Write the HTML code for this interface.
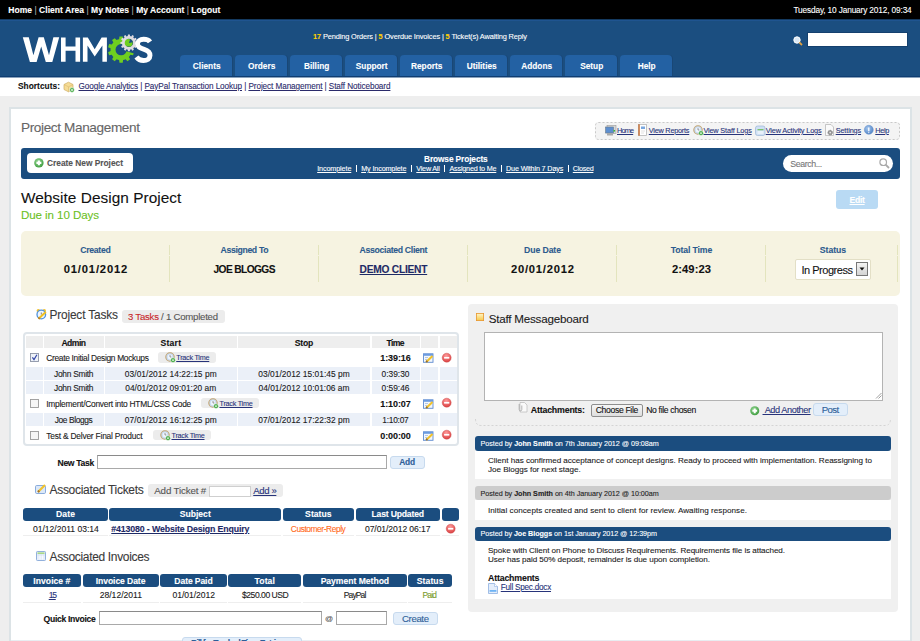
<!DOCTYPE html><html><head><meta charset="utf-8"><style>
html,body{margin:0;padding:0}
body{width:920px;height:641px;overflow:hidden;position:relative;background:#eeeeee;font-family:"Liberation Sans",sans-serif}
.t{position:absolute;white-space:nowrap;-webkit-text-stroke:0.1px currentColor}
.r{position:absolute;box-sizing:border-box}
.u{text-decoration:underline}
.sep{font-weight:normal;color:#aaa}
svg{position:absolute;overflow:visible}
</style></head><body>
<div class=r style='left:0px;top:0px;width:920px;height:19px;background:#000'></div>
<div class=t style='left:8.3px;top:-0.10px;font-size:8.5px;line-height:20px;font-weight:bold;color:#fff;letter-spacing:0.032px;'>Home <span class=sep>|</span> Client Area <span class=sep>|</span> My Notes <span class=sep>|</span> My Account <span class=sep>|</span> Logout</div>
<div class=t style='right:8.299999999999955px;top:0.10px;font-size:8.3px;line-height:20px;font-weight:normal;color:#fff;letter-spacing:-0.147px;margin-right:0.147px;'>Tuesday, 10 January 2012, 09:34</div>
<div class=r style='left:0px;top:19px;width:920px;height:58px;background:#1b4e80'></div>
<div class=r style='left:0px;top:19px;width:920px;height:1px;background:#143a60'></div>
<div class=r style='left:0px;top:20px;width:920px;height:1px;background:#1f5490'></div>
<div class=r style='left:0px;top:76px;width:920px;height:1px;background:#0f3d72'></div>
<div class=r style='left:0px;top:77px;width:920px;height:1px;background:#8aa2bc'></div>
<svg style='left:0;top:0' width='200' height='77' viewBox='0 0 200 77'>
<path d='M22.8,37.3 L28.8,37.3 L33.4,55.2 L38.6,37.3 L43.8,37.3 L49,55.2 L53.4,37.3 L59.2,37.3 L52.3,62 L45.8,62 L41.2,46.5 L36.6,62 L29.9,62Z' fill='#fff'/>
<path d='M61,37.4 H65.6 V46.6 H75.5 V37.4 H80.1 V61.8 H75.5 V50.7 H65.6 V61.8 H61Z' fill='#fff'/>
<path d='M82.9,37.4 H87.8 L94.7,49.2 L101.6,37.4 H106.9 V61.8 H102.4 V45.5 L94.7,56.5 L87.5,45.5 V61.8 H82.9Z' fill='#fff'/>
<path d='M124.38,39.62 L125.61,40.11 L127.46,38.13 L130.14,40.08 L128.83,42.44 L129.68,43.47 L130.39,44.59 L133.04,44.08 L134.07,47.23 L131.62,48.37 L131.70,49.70 L131.62,51.03 L134.07,52.17 L133.04,55.32 L130.39,54.81 L129.68,55.93 L128.83,56.96 L130.14,59.32 L127.46,61.27 L125.61,59.29 L124.38,59.78 L123.09,60.11 L122.75,62.80 L119.45,62.80 L119.11,60.11 L117.82,59.78 L116.59,59.29 L114.74,61.27 L112.06,59.32 L113.37,56.96 L112.52,55.93 L111.81,54.81 L109.16,55.32 L108.13,52.17 L110.58,51.03 L110.50,49.70 L110.58,48.37 L108.13,47.23 L109.16,44.08 L111.81,44.59 L112.52,43.47 L113.37,42.44 L112.06,40.08 L114.74,38.13 L116.59,40.11 L117.82,39.62 L119.11,39.29 L119.45,36.60 L122.75,36.60 L123.09,39.29ZM126.70,49.70 A5.6,5.6 0 1,0 115.50,49.70 A5.6,5.6 0 1,0 126.70,49.70Z' fill='#6fcf1f' fill-rule='evenodd'/>
<path d='M121.1,49.7 L132.21,40.38 A14.5,14.5 0 0,1 135.04,53.70Z' fill='#1b4e80'/>
<path d='M127.11,36.24 L127.78,36.09 L127.97,34.45 L129.83,34.45 L130.02,36.09 L130.69,36.24 L131.34,36.45 L132.32,35.12 L133.93,36.05 L133.27,37.56 L133.78,38.02 L134.24,38.53 L135.75,37.87 L136.68,39.48 L135.35,40.46 L135.56,41.11 L135.71,41.78 L137.35,41.97 L137.35,43.83 L135.71,44.02 L135.56,44.69 L135.35,45.34 L136.68,46.32 L135.75,47.93 L134.24,47.27 L133.78,47.78 L133.27,48.24 L133.93,49.75 L132.32,50.68 L131.34,49.35 L130.69,49.56 L130.02,49.71 L129.83,51.35 L127.97,51.35 L127.78,49.71 L127.11,49.56 L126.46,49.35 L125.48,50.68 L123.87,49.75 L124.53,48.24 L124.02,47.78 L123.56,47.27 L122.05,47.93 L121.12,46.32 L122.45,45.34 L122.24,44.69 L122.09,44.02 L120.45,43.83 L120.45,41.97 L122.09,41.78 L122.24,41.11 L122.45,40.46 L121.12,39.48 L122.05,37.87 L123.56,38.53 L124.02,38.02 L124.53,37.56 L123.87,36.05 L125.48,35.12 L126.46,36.45ZM133.10,42.90 A4.2,4.2 0 1,0 124.70,42.90 A4.2,4.2 0 1,0 133.10,42.90Z' fill='#dedbe0' fill-rule='evenodd'/>
<circle cx='128.9' cy='42.9' r='3.7' fill='#6fcf1f'/>
<path d='M128.9,42.9 L130.20,39.33 A3.8,3.8 0 0,1 132.64,42.24Z' fill='#1b4e80'/>
<path d='M150,41.8 C148.5,39.6 146.2,39.3 143.6,39.3 C140,39.3 137.5,41.2 137.5,44 C137.5,47.2 140.6,48.3 144.2,49.4 C148,50.6 150,52.4 150,55.5 C150,58.8 147.2,60.5 143.5,60.5 C140.4,60.5 138,59.2 136.4,57' fill='none' stroke='#fff' stroke-width='4.9'/>
</svg>
<div class=t style='left:313px;top:27.10px;font-size:7.4px;line-height:20px;font-weight:normal;color:#fff;letter-spacing:-0.126px;'><b style='color:#ffd200'>17</b> Pending Orders | <b style='color:#ffd200'>5</b> Overdue Invoices | <b style='color:#ffd200'>5</b> Ticket(s) Awaiting Reply</div>
<svg style='left:793px;top:36px' width='10' height='10' viewBox='0 0 10 10'><circle cx='4' cy='4' r='3.2' fill='#dbe8f5' stroke='#fff' stroke-width='1'/><line x1='6.3' y1='6.3' x2='9' y2='9' stroke='#e0a040' stroke-width='1.8'/></svg>
<div class=r style='left:807px;top:32px;width:101px;height:15px;background:#fff;border:1px solid #14406e'></div>
<div class=r style='left:180px;top:55px;width:52px;height:21px;background:#2361a3;border-radius:4px 4px 0 0;box-shadow:1px 0 0 #194776'></div>
<div class=t style='left:180.7px;width:52px;text-align:center;top:56.30px;font-size:8.3px;line-height:20px;font-weight:bold;color:#fff;'>Clients</div>
<div class=r style='left:235px;top:55px;width:52px;height:21px;background:#2361a3;border-radius:4px 4px 0 0;box-shadow:1px 0 0 #194776'></div>
<div class=t style='left:235.7px;width:52px;text-align:center;top:56.30px;font-size:8.3px;line-height:20px;font-weight:bold;color:#fff;'>Orders</div>
<div class=r style='left:290px;top:55px;width:52px;height:21px;background:#2361a3;border-radius:4px 4px 0 0;box-shadow:1px 0 0 #194776'></div>
<div class=t style='left:290.7px;width:52px;text-align:center;top:56.30px;font-size:8.3px;line-height:20px;font-weight:bold;color:#fff;'>Billing</div>
<div class=r style='left:345px;top:55px;width:52px;height:21px;background:#2361a3;border-radius:4px 4px 0 0;box-shadow:1px 0 0 #194776'></div>
<div class=t style='left:345.7px;width:52px;text-align:center;top:56.30px;font-size:8.3px;line-height:20px;font-weight:bold;color:#fff;'>Support</div>
<div class=r style='left:400px;top:55px;width:52px;height:21px;background:#2361a3;border-radius:4px 4px 0 0;box-shadow:1px 0 0 #194776'></div>
<div class=t style='left:400.7px;width:52px;text-align:center;top:56.30px;font-size:8.3px;line-height:20px;font-weight:bold;color:#fff;'>Reports</div>
<div class=r style='left:455px;top:55px;width:52px;height:21px;background:#2361a3;border-radius:4px 4px 0 0;box-shadow:1px 0 0 #194776'></div>
<div class=t style='left:455.7px;width:52px;text-align:center;top:56.30px;font-size:8.3px;line-height:20px;font-weight:bold;color:#fff;'>Utilities</div>
<div class=r style='left:510px;top:55px;width:52px;height:21px;background:#2361a3;border-radius:4px 4px 0 0;box-shadow:1px 0 0 #194776'></div>
<div class=t style='left:510.70000000000005px;width:52px;text-align:center;top:56.30px;font-size:8.3px;line-height:20px;font-weight:bold;color:#fff;'>Addons</div>
<div class=r style='left:565px;top:55px;width:52px;height:21px;background:#2361a3;border-radius:4px 4px 0 0;box-shadow:1px 0 0 #194776'></div>
<div class=t style='left:565.7px;width:52px;text-align:center;top:56.30px;font-size:8.3px;line-height:20px;font-weight:bold;color:#fff;'>Setup</div>
<div class=r style='left:620px;top:55px;width:52px;height:21px;background:#2361a3;border-radius:4px 4px 0 0;box-shadow:1px 0 0 #194776'></div>
<div class=t style='left:620.7px;width:52px;text-align:center;top:56.30px;font-size:8.3px;line-height:20px;font-weight:bold;color:#fff;'>Help</div>
<div class=r style='left:0px;top:78px;width:920px;height:17.5px;background:#fff'></div>
<div class=t style='left:18px;top:75.80px;font-size:8.3px;line-height:20px;font-weight:bold;color:#111;letter-spacing:0.056px;'>Shortcuts:</div>
<svg style='left:63px;top:80.5px' width='12' height='12' viewBox='0 0 12 12'><path d='M1,3.5 L5.5,1.2 L10,3.5 L10,8.5 L5.5,10.8 L1,8.5Z' fill='#f6dc95' stroke='#cfae63' stroke-width='0.7'/><path d='M1,3.5 L5.5,5.8 L10,3.5 M5.5,5.8 V10.8' stroke='#d9b870' stroke-width='0.6' fill='none'/><circle cx='9' cy='9' r='2.4' fill='#3fa83f' stroke='#fff' stroke-width='0.6'/><path d='M7.9,9 H10.1 M9,7.9 V10.1' stroke='#fff' stroke-width='0.8'/></svg>
<div class=t style='left:78.5px;top:76.90px;font-size:8.2px;line-height:20px;font-weight:normal;color:#2b2b6b;letter-spacing:-0.088px;'><span class=u>Google Analytics</span> | <span class=u>PayPal Transaction Lookup</span> | <span class=u>Project Management</span> | <span class=u>Staff Noticeboard</span></div>
<div class=r style='left:9px;top:107px;width:903px;height:553px;background:#fff;border:2px solid #dce3e6'></div>
<div class=t style='left:21px;top:117.50px;font-size:13.6px;line-height:20px;font-weight:normal;color:#666;letter-spacing:-0.379px;'>Project Management</div>
<div class=r style='left:595px;top:122px;width:305px;height:18px;background:#f4f4f4;border-radius:3px'></div>
<svg style='left:595px;top:122px' width='305' height='18' viewBox='0 0 305 18'><rect x='0.5' y='0.5' width='304' height='17' rx='3' fill='none' stroke='#c9c9c9' stroke-width='1' stroke-dasharray='2,2'/></svg>
<div class=t style='left:617px;top:120.80px;font-size:7.3px;line-height:20px;font-weight:normal;color:#27337a;letter-spacing:-0.823px;'><span class=u>Home</span></div>
<div class=t style='left:648.8px;top:120.80px;font-size:7.3px;line-height:20px;font-weight:normal;color:#27337a;letter-spacing:-0.233px;'><span class=u>View Reports</span></div>
<div class=t style='left:703.4px;top:120.80px;font-size:7.3px;line-height:20px;font-weight:normal;color:#27337a;letter-spacing:-0.146px;'><span class=u>View Staff Logs</span></div>
<div class=t style='left:765.7px;top:120.80px;font-size:7.3px;line-height:20px;font-weight:normal;color:#27337a;letter-spacing:-0.134px;'><span class=u>View Activity Logs</span></div>
<div class=t style='left:835.7px;top:120.80px;font-size:7.3px;line-height:20px;font-weight:normal;color:#27337a;letter-spacing:-0.125px;'><span class=u>Settings</span></div>
<div class=t style='left:875.3px;top:120.80px;font-size:7.3px;line-height:20px;font-weight:normal;color:#27337a;letter-spacing:-0.372px;'><span class=u>Help</span></div>
<svg style='left:605px;top:125px' width='12' height='11' viewBox='0 0 12 11'><rect x='2' y='0.5' width='9' height='8' fill='#d8d8d8' stroke='#999' stroke-width='0.6'/><rect x='0.5' y='2' width='8' height='6' fill='#5d8fd0' stroke='#6a7a8a' stroke-width='0.6'/><rect x='2' y='8' width='6' height='2.5' fill='#aaa'/><rect x='8.5' y='5' width='1.6' height='1.6' fill='#3cb83c'/></svg>
<svg style='left:638px;top:124px' width='9' height='12' viewBox='0 0 9 12'><rect x='0.5' y='0.5' width='8' height='11' fill='#fff' stroke='#aaa' stroke-width='0.7'/><rect x='0.3' y='0.3' width='1.5' height='11.4' fill='#c8733a'/><rect x='3' y='2.5' width='4' height='2.5' fill='#7aa8e0'/><path d='M3,7 H7 M3,9 H6' stroke='#ccc' stroke-width='0.6'/></svg>
<svg style='left:692.5px;top:125px' width='11' height='11' viewBox='0 0 11 11'><circle cx='5' cy='5' r='4.2' fill='#c9dcf3' stroke='#c2a470' stroke-width='1.1'/><circle cx='5' cy='5' r='2.4' fill='#eef4fc'/><path d='M5,3 V5 H6.4' stroke='#777' stroke-width='0.7' fill='none'/><circle cx='8' cy='8.2' r='2.4' fill='#3fa83f' stroke='#fff' stroke-width='0.5'/><path d='M7,8.2 H9 M8,7.2 V9.2' stroke='#fff' stroke-width='0.7'/></svg>
<svg style='left:754.5px;top:124.5px' width='11' height='11' viewBox='0 0 11 11'><rect x='0.5' y='1' width='9.5' height='9.5' rx='2' fill='#cfe0f4' stroke='#9bb5d5' stroke-width='0.7'/><rect x='2.5' y='4' width='6' height='1.3' fill='#7cc36a'/><rect x='2.5' y='6' width='6' height='3' fill='#e8f0fa'/></svg>
<svg style='left:825px;top:124px' width='10' height='12' viewBox='0 0 10 12'><path d='M0.5,0.5 H6 L8.5,3 V11.5 H0.5Z' fill='#fafafa' stroke='#b0b0b0' stroke-width='0.7'/><circle cx='5.2' cy='8.6' r='2.3' fill='#9a9a9a' stroke='#666' stroke-width='0.7' stroke-dasharray='1,0.6'/><circle cx='5.2' cy='8.6' r='0.8' fill='#eee'/></svg>
<svg style='left:864px;top:125px' width='10' height='10' viewBox='0 0 10 10'><defs><radialGradient id='g1' cx='0.4' cy='0.35' r='0.7'><stop offset='0' stop-color='#a9c9ef'/><stop offset='1' stop-color='#4a7fc4'/></radialGradient></defs><circle cx='4.8' cy='4.8' r='4.5' fill='url(#g1)' stroke='#6d95c8' stroke-width='0.5'/><path d='M4.8,2.6 V6.3' stroke='#fff' stroke-width='1.3'/><circle cx='4.8' cy='7.6' r='0.6' fill='#fff'/></svg>
<div class=r style='left:21px;top:148px;width:879px;height:30.5px;background:#1b4d7f;border-radius:3px'></div>
<div class=r style='left:27px;top:153px;width:106px;height:19.5px;background:#fff;border-radius:4px'></div>
<svg style='left:34px;top:158.2px' width='9.8' height='9.8' viewBox='0 0 9.8 9.8'><defs><radialGradient id='g2' cx='0.4' cy='0.35' r='0.7'><stop offset='0' stop-color='#8fd48f'/><stop offset='1' stop-color='#3d9b3d'/></radialGradient></defs><circle cx='4.9' cy='4.9' r='4.7' fill='url(#g2)'/><path d='M2.45,4.9 H7.3500000000000005 M4.9,2.45 V7.3500000000000005' stroke='#fff' stroke-width='2.06'/></svg>
<div class=t style='left:47px;top:153.40px;font-size:8.4px;line-height:20px;font-weight:bold;color:#555;letter-spacing:-0.020px;'>Create New Project</div>
<div class=t style='left:424px;top:148.90px;font-size:8.3px;line-height:20px;font-weight:bold;color:#fff;letter-spacing:-0.095px;'>Browse Projects</div>
<div class=t style='left:317.2px;top:158.70px;font-size:7.2px;line-height:20px;font-weight:normal;color:#fff;letter-spacing:-0.108px;'><span class=u>Incomplete</span></div>
<div class=t style='left:361.2px;top:158.70px;font-size:7.2px;line-height:20px;font-weight:normal;color:#fff;letter-spacing:-0.121px;'><span class=u>My Incomplete</span></div>
<div class=t style='left:416.3px;top:158.70px;font-size:7.2px;line-height:20px;font-weight:normal;color:#fff;letter-spacing:-0.221px;'><span class=u>View All</span></div>
<div class=t style='left:449.5px;top:158.70px;font-size:7.2px;line-height:20px;font-weight:normal;color:#fff;letter-spacing:-0.196px;'><span class=u>Assigned to Me</span></div>
<div class=t style='left:506px;top:158.70px;font-size:7.2px;line-height:20px;font-weight:normal;color:#fff;letter-spacing:-0.139px;'><span class=u>Due Within 7 Days</span></div>
<div class=t style='left:572.8px;top:158.70px;font-size:7.2px;line-height:20px;font-weight:normal;color:#fff;letter-spacing:-0.295px;'><span class=u>Closed</span></div>
<div class=r style='left:356.0px;top:164.5px;width:1.2000000000000455px;height:7.5px;background:#fff'></div>
<div class=r style='left:411.09999999999997px;top:164.5px;width:1.2000000000000455px;height:7.5px;background:#fff'></div>
<div class=r style='left:444.09999999999997px;top:164.5px;width:1.2000000000000455px;height:7.5px;background:#fff'></div>
<div class=r style='left:501.09999999999997px;top:164.5px;width:1.2000000000000455px;height:7.5px;background:#fff'></div>
<div class=r style='left:568.0px;top:164.5px;width:1.2000000000000455px;height:7.5px;background:#fff'></div>
<div class=r style='left:783px;top:155px;width:110px;height:17px;background:#fff;border-radius:9px'></div>
<div class=t style='left:790.3px;top:154.20px;font-size:8.8px;line-height:20px;font-weight:normal;color:#777;letter-spacing:-0.402px;'>Search...</div>
<svg style='left:879px;top:158px' width='11' height='11' viewBox='0 0 11 11'><circle cx='4.2' cy='4.2' r='3.3' fill='none' stroke='#aaa' stroke-width='1.2'/><line x1='6.6' y1='6.6' x2='10' y2='10' stroke='#aaa' stroke-width='1.8'/></svg>
<div class=r style='left:836px;top:190px;width:42px;height:19px;background:#b9daf4;border-radius:3px'></div>
<div class=t style='left:837.2px;width:40px;text-align:center;top:189.90px;font-size:8.6px;line-height:20px;font-weight:bold;color:#fff;letter-spacing:-0.278px;margin-left:-0.139px;'><span class=u>Edit</span></div>
<div class=t style='left:20.9px;top:187.70px;font-size:15.4px;line-height:20px;font-weight:normal;color:#111;letter-spacing:0.034px;'>Website Design Project</div>
<div class=t style='left:20.9px;top:205.10px;font-size:11.6px;line-height:20px;font-weight:normal;color:#6cbf1e;letter-spacing:-0.082px;'>Due in 10 Days</div>
<div class=r style='left:21px;top:231px;width:879px;height:64.5px;background:#f6f3e1;border-radius:5px'></div>
<div class=t style='left:25.5px;width:140px;text-align:center;top:239.90px;font-size:8.7px;line-height:20px;font-weight:bold;color:#2d5b8e;letter-spacing:-0.277px;margin-left:-0.138px;'>Created</div>
<div class=t style='left:174.5px;width:140px;text-align:center;top:239.90px;font-size:8.7px;line-height:20px;font-weight:bold;color:#2d5b8e;letter-spacing:-0.348px;margin-left:-0.174px;'>Assigned To</div>
<div class=t style='left:323.5px;width:140px;text-align:center;top:239.90px;font-size:8.7px;line-height:20px;font-weight:bold;color:#2d5b8e;letter-spacing:-0.319px;margin-left:-0.160px;'>Associated Client</div>
<div class=t style='left:472.5px;width:140px;text-align:center;top:239.90px;font-size:8.7px;line-height:20px;font-weight:bold;color:#2d5b8e;letter-spacing:-0.094px;margin-left:-0.047px;'>Due Date</div>
<div class=t style='left:621.5px;width:140px;text-align:center;top:239.90px;font-size:8.7px;line-height:20px;font-weight:bold;color:#2d5b8e;letter-spacing:-0.127px;margin-left:-0.063px;'>Total Time</div>
<div class=t style='left:763.0px;width:140px;text-align:center;top:239.90px;font-size:8.7px;line-height:20px;font-weight:bold;color:#2d5b8e;letter-spacing:-0.033px;margin-left:-0.016px;'>Status</div>
<div class=r style='left:169px;top:245px;width:1px;height:10px;background:#e3e4bd'></div>
<div class=r style='left:169px;top:256px;width:1px;height:26px;background:#e3e4bd'></div>
<div class=r style='left:318px;top:245px;width:1px;height:10px;background:#e3e4bd'></div>
<div class=r style='left:318px;top:256px;width:1px;height:26px;background:#e3e4bd'></div>
<div class=r style='left:467px;top:245px;width:1px;height:10px;background:#e3e4bd'></div>
<div class=r style='left:467px;top:256px;width:1px;height:26px;background:#e3e4bd'></div>
<div class=r style='left:616px;top:245px;width:1px;height:10px;background:#e3e4bd'></div>
<div class=r style='left:616px;top:256px;width:1px;height:26px;background:#e3e4bd'></div>
<div class=r style='left:765px;top:245px;width:1px;height:10px;background:#e3e4bd'></div>
<div class=r style='left:765px;top:256px;width:1px;height:26px;background:#e3e4bd'></div>
<div class=r style='left:897px;top:245px;width:1px;height:10px;background:#e3e4bd'></div>
<div class=r style='left:897px;top:256px;width:1px;height:26px;background:#e3e4bd'></div>
<div class=t style='left:25.5px;width:140px;text-align:center;top:259.30px;font-size:11.2px;line-height:20px;font-weight:bold;color:#111;letter-spacing:0.844px;margin-left:0.422px;'>01/01/2012</div>
<div class=t style='left:174.5px;width:140px;text-align:center;top:259.70px;font-size:10.2px;line-height:20px;font-weight:bold;color:#111;letter-spacing:-0.608px;margin-left:-0.304px;'>JOE BLOGGS</div>
<div class=t style='left:323.5px;width:140px;text-align:center;top:259.50px;font-size:10.2px;line-height:20px;font-weight:bold;color:#1e2a66;letter-spacing:-0.239px;margin-left:-0.119px;'><span class=u>DEMO CLIENT</span></div>
<div class=t style='left:472.5px;width:140px;text-align:center;top:259.30px;font-size:11.2px;line-height:20px;font-weight:bold;color:#111;letter-spacing:0.778px;margin-left:0.389px;'>20/01/2012</div>
<div class=t style='left:621.5px;width:140px;text-align:center;top:259.30px;font-size:11.2px;line-height:20px;font-weight:bold;color:#111;letter-spacing:0.073px;margin-left:0.036px;'>2:49:23</div>
<div class=r style='left:795px;top:259px;width:76px;height:21px;background:#fff;border:1px solid #e3dfc6;border-radius:2px'></div>
<div class=t style='left:801.4px;top:259.50px;font-size:11.0px;line-height:20px;font-weight:normal;color:#111;letter-spacing:-0.465px;'>In Progress</div>
<div class=r style='left:856px;top:262px;width:12px;height:14px;background:linear-gradient(#f4f4f4,#d4d4d4);border:1px solid #777'></div>
<svg style='left:859px;top:267px' width='6' height='4' viewBox='0 0 6 4'><path d='M0.5,0.5 H5.5 L3,3.5Z' fill='#111'/></svg>
<svg style='left:35.5px;top:308.5px' width='11' height='11' viewBox='0 0 11 11'><circle cx='2.3' cy='1.8' r='1.7' fill='#f2c12e'/><circle cx='8.3' cy='1.8' r='1.7' fill='#f2c12e'/><circle cx='5.3' cy='5.5' r='4.3' fill='#eef5fd' stroke='#4f92dc' stroke-width='1.3'/><path d='M5.3,3.5 V5.6' stroke='#555' stroke-width='0.7'/><path d='M2.5,9.8 L9.8,3' stroke='#f0c020' stroke-width='2'/><path d='M2.5,9.8 L3.6,8.7' stroke='#b07a30' stroke-width='2'/></svg>
<div class=t style='left:49.4px;top:305.30px;font-size:11.9px;line-height:20px;font-weight:normal;color:#3a3a3a;letter-spacing:-0.158px;'>Project Tasks</div>
<div class=r style='left:122px;top:310px;width:103px;height:12.5px;background:#ececec;border-radius:3px'></div>
<div class=t style='left:128px;top:306.80px;font-size:9.6px;line-height:20px;font-weight:normal;color:#555;letter-spacing:-0.238px;'><span style='color:#c8262a'>3 Tasks</span> / 1 Completed</div>
<div class=r style='left:23px;top:332px;width:436px;height:114px;background:#fff;border:2px solid #dfe5ea;border-radius:4px'></div>
<div class=r style='left:26px;top:335.5px;width:16.5px;height:12.5px;background:#eeeeee'></div>
<div class=r style='left:44px;top:335.5px;width:59.5px;height:12.5px;background:#eeeeee'></div>
<div class=r style='left:105px;top:335.5px;width:131.5px;height:12.5px;background:#eeeeee'></div>
<div class=r style='left:238px;top:335.5px;width:132px;height:12.5px;background:#eeeeee'></div>
<div class=r style='left:371.5px;top:335.5px;width:48.0px;height:12.5px;background:#eeeeee'></div>
<div class=r style='left:421px;top:335.5px;width:17px;height:12.5px;background:#eeeeee'></div>
<div class=r style='left:439.5px;top:335.5px;width:17.0px;height:12.5px;background:#eeeeee'></div>
<div class=t style='left:3.75px;width:140px;text-align:center;top:332.70px;font-size:8.6px;line-height:20px;font-weight:bold;color:#111;letter-spacing:-0.534px;margin-left:-0.267px;'>Admin</div>
<div class=t style='left:100.75px;width:140px;text-align:center;top:332.70px;font-size:8.6px;line-height:20px;font-weight:bold;color:#111;letter-spacing:0.252px;margin-left:0.126px;'>Start</div>
<div class=t style='left:234.0px;width:140px;text-align:center;top:332.70px;font-size:8.6px;line-height:20px;font-weight:bold;color:#111;letter-spacing:-0.115px;margin-left:-0.057px;'>Stop</div>
<div class=t style='left:325.5px;width:140px;text-align:center;top:332.70px;font-size:8.6px;line-height:20px;font-weight:bold;color:#111;letter-spacing:-0.635px;margin-left:-0.318px;'>Time</div>
<svg style='left:30px;top:353.1px' width='9' height='9' viewBox='0 0 9 9'><rect x='0.5' y='0.5' width='8' height='8' fill='#eef2f8' stroke='#8b93a6' stroke-width='0.9'/><path d='M2.4,4.3 L4,6.6 L6.9,1.8' stroke='#3346a8' stroke-width='1.2' fill='none'/></svg>
<div class=t style='left:46.25px;top:347.80px;font-size:8.4px;line-height:20px;font-weight:normal;color:#1a1a1a;letter-spacing:-0.309px;'>Create Initial Design Mockups</div>
<div class=r style='left:158px;top:351.8px;width:58.25px;height:10.800000000000011px;background:#ececec;border-radius:3px'></div>
<svg style='left:164.5px;top:352.3px' width='11' height='11' viewBox='0 0 11 11'><circle cx='5' cy='5' r='4.2' fill='#c9dcf3' stroke='#c2a470' stroke-width='1.1'/><circle cx='5' cy='5' r='2.4' fill='#eef4fc'/><path d='M5,3 V5 H6.4' stroke='#777' stroke-width='0.7' fill='none'/><circle cx='8' cy='8.2' r='2.4' fill='#3fa83f' stroke='#fff' stroke-width='0.5'/><path d='M7,8.2 H9 M8,7.2 V9.2' stroke='#fff' stroke-width='0.7'/></svg>
<div class=t style='left:176.25px;top:348.00px;font-size:7.2px;line-height:20px;font-weight:normal;color:#27337a;letter-spacing:-0.226px;'><span class=u>Track Time</span></div>
<div class=t style='left:325.5px;width:140px;text-align:center;top:347.80px;font-size:9.0px;line-height:20px;font-weight:bold;color:#111;letter-spacing:-0.089px;margin-left:-0.044px;'>1:39:16</div>
<svg style='left:423px;top:352.8px' width='11' height='10' viewBox='0 0 11 10'><rect x='0.5' y='0.8' width='9.5' height='8.5' fill='#f3f7fc' stroke='#5d8ad0' stroke-width='0.9'/><rect x='0.5' y='0.8' width='9.5' height='2' fill='#6b9be0'/><path d='M2,4.5 H5 M2,6.5 H4' stroke='#9bb4d8' stroke-width='0.7'/><path d='M3.2,9 L9.5,3' stroke='#f2c22a' stroke-width='2.1'/><path d='M3.2,9 L4.3,8' stroke='#8a6a3a' stroke-width='2'/></svg>
<svg style='left:442px;top:352.7px' width='10' height='10' viewBox='0 0 10 10'><defs><radialGradient id='g3' cx='0.45' cy='0.3' r='0.75'><stop offset='0' stop-color='#ff9a9a'/><stop offset='1' stop-color='#d8393a'/></radialGradient></defs><circle cx='4.7' cy='4.7' r='4.5' fill='url(#g3)' stroke='#c84848' stroke-width='0.4'/><rect x='2.1' y='3.9' width='5.2' height='1.7' fill='#fff'/></svg>
<div class=r style='left:26px;top:367px;width:16.5px;height:13px;background:#ebf0f8'></div>
<div class=r style='left:44px;top:367px;width:59.5px;height:13px;background:#ebf0f8'></div>
<div class=r style='left:105px;top:367px;width:131.5px;height:13px;background:#ebf0f8'></div>
<div class=r style='left:238px;top:367px;width:132px;height:13px;background:#ebf0f8'></div>
<div class=r style='left:371.5px;top:367px;width:48.0px;height:13px;background:#ebf0f8'></div>
<div class=r style='left:421px;top:367px;width:17px;height:13px;background:#ebf0f8'></div>
<div class=r style='left:439.5px;top:367px;width:17.0px;height:13px;background:#ebf0f8'></div>
<div class=t style='left:3.75px;width:140px;text-align:center;top:364.20px;font-size:8.4px;line-height:20px;font-weight:normal;color:#1a1a1a;letter-spacing:-0.267px;margin-left:-0.134px;'>John Smith</div>
<div class=t style='left:100.75px;width:140px;text-align:center;top:364.20px;font-size:8.4px;line-height:20px;font-weight:normal;color:#1a1a1a;letter-spacing:0.045px;margin-left:0.022px;'>03/01/2012 14:22:15 pm</div>
<div class=t style='left:234.0px;width:140px;text-align:center;top:364.20px;font-size:8.4px;line-height:20px;font-weight:normal;color:#1a1a1a;letter-spacing:0.021px;margin-left:0.010px;'>03/01/2012 15:01:45 pm</div>
<div class=t style='left:325.5px;width:140px;text-align:center;top:364.20px;font-size:8.4px;line-height:20px;font-weight:normal;color:#1a1a1a;letter-spacing:0.008px;margin-left:0.004px;'>0:39:30</div>
<div class=r style='left:26px;top:381px;width:16.5px;height:13px;background:#ebf0f8'></div>
<div class=r style='left:44px;top:381px;width:59.5px;height:13px;background:#ebf0f8'></div>
<div class=r style='left:105px;top:381px;width:131.5px;height:13px;background:#ebf0f8'></div>
<div class=r style='left:238px;top:381px;width:132px;height:13px;background:#ebf0f8'></div>
<div class=r style='left:371.5px;top:381px;width:48.0px;height:13px;background:#ebf0f8'></div>
<div class=r style='left:421px;top:381px;width:17px;height:13px;background:#ebf0f8'></div>
<div class=r style='left:439.5px;top:381px;width:17.0px;height:13px;background:#ebf0f8'></div>
<div class=t style='left:3.75px;width:140px;text-align:center;top:378.20px;font-size:8.4px;line-height:20px;font-weight:normal;color:#1a1a1a;letter-spacing:-0.267px;margin-left:-0.134px;'>John Smith</div>
<div class=t style='left:100.75px;width:140px;text-align:center;top:378.20px;font-size:8.4px;line-height:20px;font-weight:normal;color:#1a1a1a;letter-spacing:0.009px;margin-left:0.004px;'>04/01/2012 09:01:20 am</div>
<div class=t style='left:234.0px;width:140px;text-align:center;top:378.20px;font-size:8.4px;line-height:20px;font-weight:normal;color:#1a1a1a;letter-spacing:0.009px;margin-left:0.004px;'>04/01/2012 10:01:06 am</div>
<div class=t style='left:325.5px;width:140px;text-align:center;top:378.20px;font-size:8.4px;line-height:20px;font-weight:normal;color:#1a1a1a;letter-spacing:0.008px;margin-left:0.004px;'>0:59:46</div>
<svg style='left:30px;top:398.8px' width='9' height='9' viewBox='0 0 9 9'><rect x='0.5' y='0.5' width='8' height='8' fill='#f6f6f6' stroke='#9a9a9a' stroke-width='0.9'/></svg>
<div class=t style='left:46.25px;top:393.50px;font-size:8.4px;line-height:20px;font-weight:normal;color:#1a1a1a;letter-spacing:-0.246px;'>Implement/Convert into HTML/CSS Code</div>
<div class=r style='left:201.25px;top:397.5px;width:57.5px;height:10.800000000000011px;background:#ececec;border-radius:3px'></div>
<svg style='left:207.75px;top:398px' width='11' height='11' viewBox='0 0 11 11'><circle cx='5' cy='5' r='4.2' fill='#c9dcf3' stroke='#c2a470' stroke-width='1.1'/><circle cx='5' cy='5' r='2.4' fill='#eef4fc'/><path d='M5,3 V5 H6.4' stroke='#777' stroke-width='0.7' fill='none'/><circle cx='8' cy='8.2' r='2.4' fill='#3fa83f' stroke='#fff' stroke-width='0.5'/><path d='M7,8.2 H9 M8,7.2 V9.2' stroke='#fff' stroke-width='0.7'/></svg>
<div class=t style='left:219.5px;top:393.70px;font-size:7.2px;line-height:20px;font-weight:normal;color:#27337a;letter-spacing:-0.226px;'><span class=u>Track Time</span></div>
<div class=t style='left:325.5px;width:140px;text-align:center;top:393.50px;font-size:9.0px;line-height:20px;font-weight:bold;color:#111;letter-spacing:-0.089px;margin-left:-0.044px;'>1:10:07</div>
<svg style='left:423px;top:398.5px' width='11' height='10' viewBox='0 0 11 10'><rect x='0.5' y='0.8' width='9.5' height='8.5' fill='#f3f7fc' stroke='#5d8ad0' stroke-width='0.9'/><rect x='0.5' y='0.8' width='9.5' height='2' fill='#6b9be0'/><path d='M2,4.5 H5 M2,6.5 H4' stroke='#9bb4d8' stroke-width='0.7'/><path d='M3.2,9 L9.5,3' stroke='#f2c22a' stroke-width='2.1'/><path d='M3.2,9 L4.3,8' stroke='#8a6a3a' stroke-width='2'/></svg>
<svg style='left:442px;top:398.4px' width='10' height='10' viewBox='0 0 10 10'><defs><radialGradient id='g4' cx='0.45' cy='0.3' r='0.75'><stop offset='0' stop-color='#ff9a9a'/><stop offset='1' stop-color='#d8393a'/></radialGradient></defs><circle cx='4.7' cy='4.7' r='4.5' fill='url(#g4)' stroke='#c84848' stroke-width='0.4'/><rect x='2.1' y='3.9' width='5.2' height='1.7' fill='#fff'/></svg>
<div class=r style='left:26px;top:413px;width:16.5px;height:13px;background:#ebf0f8'></div>
<div class=r style='left:44px;top:413px;width:59.5px;height:13px;background:#ebf0f8'></div>
<div class=r style='left:105px;top:413px;width:131.5px;height:13px;background:#ebf0f8'></div>
<div class=r style='left:238px;top:413px;width:132px;height:13px;background:#ebf0f8'></div>
<div class=r style='left:371.5px;top:413px;width:48.0px;height:13px;background:#ebf0f8'></div>
<div class=r style='left:421px;top:413px;width:17px;height:13px;background:#ebf0f8'></div>
<div class=r style='left:439.5px;top:413px;width:17.0px;height:13px;background:#ebf0f8'></div>
<div class=t style='left:3.75px;width:140px;text-align:center;top:410.20px;font-size:8.4px;line-height:20px;font-weight:normal;color:#1a1a1a;letter-spacing:-0.382px;margin-left:-0.191px;'>Joe Bloggs</div>
<div class=t style='left:100.75px;width:140px;text-align:center;top:410.20px;font-size:8.4px;line-height:20px;font-weight:normal;color:#1a1a1a;letter-spacing:0.045px;margin-left:0.022px;'>07/01/2012 16:12:25 pm</div>
<div class=t style='left:234.0px;width:140px;text-align:center;top:410.20px;font-size:8.4px;line-height:20px;font-weight:normal;color:#1a1a1a;letter-spacing:0.021px;margin-left:0.010px;'>07/01/2012 17:22:32 pm</div>
<div class=t style='left:325.5px;width:140px;text-align:center;top:410.20px;font-size:8.4px;line-height:20px;font-weight:normal;color:#1a1a1a;letter-spacing:-0.242px;margin-left:-0.121px;'>1:10:07</div>
<svg style='left:30px;top:430.8px' width='9' height='9' viewBox='0 0 9 9'><rect x='0.5' y='0.5' width='8' height='8' fill='#f6f6f6' stroke='#9a9a9a' stroke-width='0.9'/></svg>
<div class=t style='left:46.25px;top:425.50px;font-size:8.4px;line-height:20px;font-weight:normal;color:#1a1a1a;letter-spacing:-0.201px;'>Test &amp; Delver Final Product</div>
<div class=r style='left:153.25px;top:429.5px;width:58.0px;height:10.800000000000011px;background:#ececec;border-radius:3px'></div>
<svg style='left:159.75px;top:430px' width='11' height='11' viewBox='0 0 11 11'><circle cx='5' cy='5' r='4.2' fill='#c9dcf3' stroke='#c2a470' stroke-width='1.1'/><circle cx='5' cy='5' r='2.4' fill='#eef4fc'/><path d='M5,3 V5 H6.4' stroke='#777' stroke-width='0.7' fill='none'/><circle cx='8' cy='8.2' r='2.4' fill='#3fa83f' stroke='#fff' stroke-width='0.5'/><path d='M7,8.2 H9 M8,7.2 V9.2' stroke='#fff' stroke-width='0.7'/></svg>
<div class=t style='left:171.5px;top:425.70px;font-size:7.2px;line-height:20px;font-weight:normal;color:#27337a;letter-spacing:-0.226px;'><span class=u>Track Time</span></div>
<div class=t style='left:325.5px;width:140px;text-align:center;top:425.50px;font-size:9.0px;line-height:20px;font-weight:bold;color:#111;letter-spacing:-0.089px;margin-left:-0.044px;'>0:00:00</div>
<svg style='left:423px;top:430.5px' width='11' height='10' viewBox='0 0 11 10'><rect x='0.5' y='0.8' width='9.5' height='8.5' fill='#f3f7fc' stroke='#5d8ad0' stroke-width='0.9'/><rect x='0.5' y='0.8' width='9.5' height='2' fill='#6b9be0'/><path d='M2,4.5 H5 M2,6.5 H4' stroke='#9bb4d8' stroke-width='0.7'/><path d='M3.2,9 L9.5,3' stroke='#f2c22a' stroke-width='2.1'/><path d='M3.2,9 L4.3,8' stroke='#8a6a3a' stroke-width='2'/></svg>
<svg style='left:442px;top:430.4px' width='10' height='10' viewBox='0 0 10 10'><defs><radialGradient id='g5' cx='0.45' cy='0.3' r='0.75'><stop offset='0' stop-color='#ff9a9a'/><stop offset='1' stop-color='#d8393a'/></radialGradient></defs><circle cx='4.7' cy='4.7' r='4.5' fill='url(#g5)' stroke='#c84848' stroke-width='0.4'/><rect x='2.1' y='3.9' width='5.2' height='1.7' fill='#fff'/></svg>
<div class=t style='left:57.5px;top:452.50px;font-size:8.6px;line-height:20px;font-weight:bold;color:#111;letter-spacing:-0.324px;'>New Task</div>
<div class=r style='left:97px;top:454.5px;width:289.5px;height:14.5px;background:#fff;border:1px solid #a9a9a9;border-top-color:#8a8a8a'></div>
<div class=r style='left:390px;top:455.5px;width:34.5px;height:13.0px;background:#e3eefa;border:1px solid #c7daee;border-radius:3px'></div>
<div class=t style='left:387.2px;width:40px;text-align:center;top:452.30px;font-size:8.4px;line-height:20px;font-weight:bold;color:#2e5e98;letter-spacing:-0.266px;margin-left:-0.133px;'>Add</div>
<svg style='left:35px;top:483.5px' width='12' height='10' viewBox='0 0 12 10'><rect x='0.5' y='1.5' width='10' height='8' rx='1.2' fill='#dbe8f8' stroke='#7fa4d8' stroke-width='0.9'/><path d='M3,8 L10,1' stroke='#f2c22a' stroke-width='2.2'/><path d='M3,8 L4.2,6.8' stroke='#a07030' stroke-width='2'/></svg>
<div class=t style='left:49.5px;top:480.10px;font-size:12.0px;line-height:20px;font-weight:normal;color:#3a3a3a;letter-spacing:-0.301px;'>Associated Tickets</div>
<div class=r style='left:148px;top:484.25px;width:135px;height:12.75px;background:#ececec;border-radius:3px'></div>
<div class=t style='left:154.25px;top:481.30px;font-size:9.8px;line-height:20px;font-weight:normal;color:#555;letter-spacing:-0.175px;'>Add Ticket #</div>
<div class=r style='left:208.75px;top:485.5px;width:41.75px;height:11.5px;background:#fff;border:1px solid #cfcfcf'></div>
<div class=t style='left:253.25px;top:481.30px;font-size:9.6px;line-height:20px;font-weight:normal;color:#27337a;letter-spacing:-0.395px;'><span class=u>Add &raquo;</span></div>
<div class=r style='left:23px;top:507.5px;width:85px;height:13.0px;background:#1b4d7f;border-radius:3px'></div>
<div class=r style='left:109.25px;top:507.5px;width:172.0px;height:13.0px;background:#1b4d7f;border-radius:3px'></div>
<div class=r style='left:283px;top:507.5px;width:70.75px;height:13.0px;background:#1b4d7f;border-radius:3px'></div>
<div class=r style='left:355.5px;top:507.5px;width:84.5px;height:13.0px;background:#1b4d7f;border-radius:3px'></div>
<div class=r style='left:441.75px;top:507.5px;width:17.0px;height:13.0px;background:#1b4d7f;border-radius:3px'></div>
<div class=t style='left:-14.5px;width:160px;text-align:center;top:504.20px;font-size:8.6px;line-height:20px;font-weight:bold;color:#fff;letter-spacing:0.120px;margin-left:0.060px;'>Date</div>
<div class=t style='left:115.25px;width:160px;text-align:center;top:504.20px;font-size:8.6px;line-height:20px;font-weight:bold;color:#fff;letter-spacing:-0.008px;margin-left:-0.004px;'>Subject</div>
<div class=t style='left:238.375px;width:160px;text-align:center;top:504.20px;font-size:8.6px;line-height:20px;font-weight:bold;color:#fff;letter-spacing:0.047px;margin-left:0.023px;'>Status</div>
<div class=t style='left:317.75px;width:160px;text-align:center;top:504.20px;font-size:8.6px;line-height:20px;font-weight:bold;color:#fff;letter-spacing:-0.176px;margin-left:-0.088px;'>Last Updated</div>
<div class=t style='left:-4.099999999999994px;width:140px;text-align:center;top:518.90px;font-size:8.6px;line-height:20px;font-weight:normal;color:#1a1a1a;letter-spacing:-0.034px;margin-left:-0.017px;'>01/12/2011 03:14</div>
<div class=t style='left:111.25px;top:518.90px;font-size:8.8px;line-height:20px;font-weight:bold;color:#1e2a66;letter-spacing:-0.141px;'><span class=u>#413080 - Website Design Enquiry</span></div>
<div class=t style='left:248.3px;width:140px;text-align:center;top:518.90px;font-size:8.4px;line-height:20px;font-weight:normal;color:#ff6a1a;letter-spacing:-0.424px;margin-left:-0.212px;'>Customer-Reply</div>
<div class=t style='left:327.75px;width:140px;text-align:center;top:518.90px;font-size:8.6px;line-height:20px;font-weight:normal;color:#1a1a1a;letter-spacing:-0.094px;margin-left:-0.047px;'>07/01/2012 06:17</div>
<svg style='left:445.5px;top:523.8px' width='10' height='10' viewBox='0 0 10 10'><defs><radialGradient id='g6' cx='0.45' cy='0.3' r='0.75'><stop offset='0' stop-color='#ff9a9a'/><stop offset='1' stop-color='#d8393a'/></radialGradient></defs><circle cx='4.7' cy='4.7' r='4.5' fill='url(#g6)' stroke='#c84848' stroke-width='0.4'/><rect x='2.1' y='3.9' width='5.2' height='1.7' fill='#fff'/></svg>
<div class=r style='left:23px;top:534.5px;width:85px;height:1.0px;background:#eeeeee'></div>
<div class=r style='left:109.25px;top:534.5px;width:172.0px;height:1.0px;background:#eeeeee'></div>
<div class=r style='left:283px;top:534.5px;width:70.75px;height:1.0px;background:#eeeeee'></div>
<div class=r style='left:355.5px;top:534.5px;width:84.5px;height:1.0px;background:#eeeeee'></div>
<div class=r style='left:441.75px;top:534.5px;width:17.0px;height:1.0px;background:#eeeeee'></div>
<svg style='left:36px;top:550.5px' width='10' height='10' viewBox='0 0 10 10'><rect x='0.5' y='0.5' width='9' height='9' rx='0.8' fill='#e6eefa' stroke='#86a8d8' stroke-width='0.9'/><rect x='1.5' y='1.5' width='7' height='1.3' fill='#9bd36a'/><path d='M4,3.5 V8.5 M6.5,3.5 V8.5' stroke='#fff' stroke-width='0.7'/><path d='M1.5,4 H8.5' stroke='#c8d8ee' stroke-width='0.6'/></svg>
<div class=t style='left:49.5px;top:547.30px;font-size:12.0px;line-height:20px;font-weight:normal;color:#3a3a3a;letter-spacing:-0.337px;'>Associated Invoices</div>
<div class=r style='left:23px;top:574.25px;width:57.75px;height:12.75px;background:#1b4d7f;border-radius:3px'></div>
<div class=r style='left:82.5px;top:574.25px;width:76.25px;height:12.75px;background:#1b4d7f;border-radius:3px'></div>
<div class=r style='left:160px;top:574.25px;width:67px;height:12.75px;background:#1b4d7f;border-radius:3px'></div>
<div class=r style='left:228.25px;top:574.25px;width:73.0px;height:12.75px;background:#1b4d7f;border-radius:3px'></div>
<div class=r style='left:303px;top:574.25px;width:103.75px;height:12.75px;background:#1b4d7f;border-radius:3px'></div>
<div class=r style='left:408.25px;top:574.25px;width:43.75px;height:12.75px;background:#1b4d7f;border-radius:3px'></div>
<div class=t style='left:-28.125px;width:160px;text-align:center;top:571.00px;font-size:8.6px;line-height:20px;font-weight:bold;color:#fff;letter-spacing:0.027px;margin-left:0.014px;'>Invoice #</div>
<div class=t style='left:40.625px;width:160px;text-align:center;top:571.00px;font-size:8.6px;line-height:20px;font-weight:bold;color:#fff;letter-spacing:-0.095px;margin-left:-0.047px;'>Invoice Date</div>
<div class=t style='left:113.5px;width:160px;text-align:center;top:571.00px;font-size:8.6px;line-height:20px;font-weight:bold;color:#fff;letter-spacing:-0.109px;margin-left:-0.054px;'>Date Paid</div>
<div class=t style='left:184.75px;width:160px;text-align:center;top:571.00px;font-size:8.6px;line-height:20px;font-weight:bold;color:#fff;letter-spacing:0.090px;margin-left:0.045px;'>Total</div>
<div class=t style='left:274.875px;width:160px;text-align:center;top:571.00px;font-size:8.6px;line-height:20px;font-weight:bold;color:#fff;letter-spacing:-0.020px;margin-left:-0.010px;'>Payment Method</div>
<div class=t style='left:350.125px;width:160px;text-align:center;top:571.00px;font-size:8.6px;line-height:20px;font-weight:bold;color:#fff;letter-spacing:0.097px;margin-left:0.048px;'>Status</div>
<div class=t style='left:22.85px;width:60px;text-align:center;top:585.10px;font-size:8.6px;line-height:20px;font-weight:normal;color:#27337a;letter-spacing:-1.262px;margin-left:-0.631px;'><span class=u>15</span></div>
<div class=t style='left:70.85px;width:100px;text-align:center;top:585.10px;font-size:8.6px;line-height:20px;font-weight:normal;color:#1a1a1a;letter-spacing:-0.008px;margin-left:-0.004px;'>28/12/2011</div>
<div class=t style='left:143.8px;width:100px;text-align:center;top:585.10px;font-size:8.6px;line-height:20px;font-weight:normal;color:#1a1a1a;letter-spacing:-0.068px;margin-left:-0.034px;'>01/01/2012</div>
<div class=t style='left:215.39999999999998px;width:100px;text-align:center;top:585.10px;font-size:8.6px;line-height:20px;font-weight:normal;color:#1a1a1a;letter-spacing:-0.486px;margin-left:-0.243px;'>$250.00 USD</div>
<div class=t style='left:305.0px;width:100px;text-align:center;top:585.10px;font-size:8.4px;line-height:20px;font-weight:normal;color:#1a1a1a;letter-spacing:-0.809px;margin-left:-0.405px;'>PayPal</div>
<div class=t style='left:399.75px;width:60px;text-align:center;top:585.10px;font-size:8.4px;line-height:20px;font-weight:normal;color:#7a9a2a;letter-spacing:-0.755px;margin-left:-0.378px;'>Paid</div>
<div class=r style='left:23px;top:601.5px;width:57.75px;height:1.0px;background:#eeeeee'></div>
<div class=r style='left:82.5px;top:601.5px;width:76.25px;height:1.0px;background:#eeeeee'></div>
<div class=r style='left:160px;top:601.5px;width:67px;height:1.0px;background:#eeeeee'></div>
<div class=r style='left:228.25px;top:601.5px;width:73.0px;height:1.0px;background:#eeeeee'></div>
<div class=r style='left:303px;top:601.5px;width:103.75px;height:1.0px;background:#eeeeee'></div>
<div class=r style='left:408.25px;top:601.5px;width:43.75px;height:1.0px;background:#eeeeee'></div>
<div class=t style='left:43.6px;top:608.90px;font-size:8.6px;line-height:20px;font-weight:bold;color:#111;letter-spacing:-0.308px;'>Quick Invoice</div>
<div class=r style='left:98.7px;top:611.2px;width:223.3px;height:14.0px;background:#fff;border:1px solid #a9a9a9;border-top-color:#8a8a8a'></div>
<div class=t style='left:325px;top:608.90px;font-size:8.0px;line-height:20px;font-weight:normal;color:#555;letter-spacing:-1.525px;'>@</div>
<div class=r style='left:335.7px;top:611.2px;width:51.5px;height:14.0px;background:#fff;border:1px solid #a9a9a9;border-top-color:#8a8a8a'></div>
<div class=r style='left:392.6px;top:612px;width:45.19999999999999px;height:12.799999999999955px;background:#e3eefa;border:1px solid #c7daee;border-radius:3px'></div>
<div class=t style='left:385.5px;width:60px;text-align:center;top:608.90px;font-size:9.6px;line-height:20px;font-weight:normal;color:#2e5e98;letter-spacing:-0.359px;margin-left:-0.180px;'>Create</div>
<div class=r style='left:11px;top:640px;width:899px;height:1px;background:#e8edf1'></div>
<div class=r style='left:182px;top:637px;width:120px;height:23px;background:#e3eefa;border:1px solid #c7daee;border-radius:3px'></div>
<div class=r style='left:468px;top:304px;width:429.5px;height:307.5px;background:#f0f0f0;border-radius:4px'></div>
<svg style='left:476px;top:313.2px' width='8' height='8' viewBox='0 0 8 8'><defs><linearGradient id='g7' x1='0' y1='0' x2='0' y2='1'><stop offset='0' stop-color='#fff6c8'/><stop offset='1' stop-color='#f6c84a'/></linearGradient></defs><rect x='0.4' y='0.4' width='7.2' height='7.2' fill='url(#g7)' stroke='#e8962e' stroke-width='0.8'/></svg>
<div class=t style='left:488.75px;top:308.60px;font-size:11.6px;line-height:20px;font-weight:normal;color:#1a1a1a;letter-spacing:-0.210px;'>Staff Messageboard</div>
<div class=r style='left:484.25px;top:332.25px;width:398.75px;height:68.25px;background:#fff;border:1px solid #b3b3b3'></div>
<svg style='left:875px;top:392px' width='7' height='7' viewBox='0 0 7 7'><path d='M1,6.5 L6.5,1 M3.5,6.5 L6.5,3.5' stroke='#888' stroke-width='0.8'/></svg>
<svg style='left:517px;top:402px' width='11' height='11' viewBox='0 0 11 11'><path d='M3,0.5 H7.5 L10,3 V10 H3Z' fill='#fafafa' stroke='#b8b8b8' stroke-width='0.7'/><path d='M2.2,2 V7.5 A1.3,1.3 0 0,0 4.8,7.5 V3.5' stroke='#a0a0a0' stroke-width='0.8' fill='none'/></svg>
<div class=t style='left:530.75px;top:399.80px;font-size:8.8px;line-height:20px;font-weight:bold;color:#111;letter-spacing:-0.179px;'>Attachments:</div>
<div class=r style='left:590.75px;top:404.25px;width:52.5px;height:12.25px;background:linear-gradient(#f6f6f6,#dedede);border:1px solid #8e8e8e;border-radius:2px'></div>
<div class=t style='left:587.0px;width:60px;text-align:center;top:400.10px;font-size:8.6px;line-height:20px;font-weight:normal;color:#111;letter-spacing:-0.336px;margin-left:-0.168px;'>Choose File</div>
<div class=t style='left:646.25px;top:400.10px;font-size:8.6px;line-height:20px;font-weight:normal;color:#111;letter-spacing:-0.344px;'>No file chosen</div>
<svg style='left:750px;top:406px' width='9.5' height='9.5' viewBox='0 0 9.5 9.5'><defs><radialGradient id='g8' cx='0.4' cy='0.35' r='0.7'><stop offset='0' stop-color='#8fd48f'/><stop offset='1' stop-color='#3d9b3d'/></radialGradient></defs><circle cx='4.75' cy='4.75' r='4.55' fill='url(#g8)'/><path d='M2.375,4.75 H7.125 M4.75,2.375 V7.125' stroke='#fff' stroke-width='1.99'/></svg>
<div class=t style='left:762.5px;top:400.10px;font-size:9.2px;line-height:20px;font-weight:normal;color:#27337a;letter-spacing:-0.420px;'><span class=u>&nbsp;Add Another</span></div>
<div class=r style='left:812.5px;top:403px;width:35.0px;height:12.5px;background:#e3eefa;border:1px solid #c7daee;border-radius:3px'></div>
<div class=t style='left:810.5px;width:40px;text-align:center;top:399.80px;font-size:9.6px;line-height:20px;font-weight:normal;color:#2e5e98;letter-spacing:-0.568px;margin-left:-0.284px;'>Post</div>
<svg style='left:474px;top:418px' width='420' height='10' viewBox='0 0 420 10'><path d='M1.5,1 Q1.5,7.5 7,7.5 H411 Q416.5,7.5 416.5,1' fill='none' stroke='#d4d4d4' stroke-width='1' stroke-dasharray='2,2'/></svg>
<div class=r style='left:475px;top:435.5px;width:416.25px;height:15.0px;background:#1b4d7f;border-radius:3px'></div>
<div class=t style='left:480.5px;top:433.50px;font-size:7.2px;line-height:20px;font-weight:normal;color:#fff;letter-spacing:-0.034px;'>Posted by <b>John Smith</b> on 7th January 2012 @ 09:08am</div>
<div class=r style='left:475px;top:450.5px;width:416.25px;height:28.25px;background:#fff'></div>
<div class=t style='left:488px;top:451.10px;font-size:8.1px;line-height:20px;font-weight:normal;color:#1a1a1a;letter-spacing:-0.033px;'>Client has confirmed acceptance of concept designs. Ready to proceed with implementation. Reassigning to</div>
<div class=t style='left:488px;top:460.10px;font-size:8.1px;line-height:20px;font-weight:normal;color:#1a1a1a;letter-spacing:-0.034px;'>Joe Bloggs for next stage.</div>
<div class=r style='left:475px;top:486.25px;width:416.25px;height:13.75px;background:#cccccc;border-radius:3px'></div>
<div class=t style='left:480.5px;top:483.62px;font-size:7.2px;line-height:20px;font-weight:normal;color:#222;letter-spacing:-0.034px;'>Posted by <b>John Smith</b> on 4th January 2012 @ 10:00am</div>
<div class=r style='left:475px;top:500px;width:416.25px;height:19.5px;background:#fff'></div>
<div class=t style='left:488px;top:500.60px;font-size:8.1px;line-height:20px;font-weight:normal;color:#1a1a1a;letter-spacing:0.049px;'>Initial concepts created and sent to client for review. Awaiting response.</div>
<div class=r style='left:475px;top:526.75px;width:416.25px;height:14.0px;background:#1b4d7f;border-radius:3px'></div>
<div class=t style='left:480.5px;top:524.25px;font-size:7.2px;line-height:20px;font-weight:normal;color:#fff;letter-spacing:-0.054px;'>Posted by <b>Joe Bloggs</b> on 1st January 2012 @ 12:39pm</div>
<div class=r style='left:475px;top:540.75px;width:416.25px;height:58.0px;background:#fff'></div>
<div class=t style='left:488px;top:541.35px;font-size:8.1px;line-height:20px;font-weight:normal;color:#1a1a1a;letter-spacing:-0.071px;'>Spoke with Client on Phone to Discuss Requirements. Requirements file is attached.</div>
<div class=t style='left:488px;top:550.35px;font-size:8.1px;line-height:20px;font-weight:normal;color:#1a1a1a;letter-spacing:-0.058px;'>User has paid 50% deposit, remainder is due upon completion.</div>
<div class=t style='left:488px;top:568.10px;font-size:8.8px;line-height:20px;font-weight:bold;color:#111;letter-spacing:-0.178px;'>Attachments</div>
<svg style='left:488px;top:583px' width='10' height='11' viewBox='0 0 10 11'><path d='M0.5,0.5 H6.5 L9.5,3.5 V10.5 H0.5Z' fill='#e4eefb' stroke='#8eb0e0' stroke-width='0.8'/><path d='M6.5,0.5 V3.5 H9.5' fill='#fff' stroke='#8eb0e0' stroke-width='0.6'/><rect x='1.6' y='7' width='6.8' height='1.8' fill='#6fb4f4'/></svg>
<div class=t style='left:500.75px;top:578.00px;font-size:8.2px;line-height:20px;font-weight:normal;color:#27337a;letter-spacing:-0.246px;'><span class=u>Full Spec.docx</span></div>
<div class=t style='left:137.5px;width:200px;text-align:center;top:633.30px;font-size:8.6px;line-height:20px;font-weight:bold;color:#2e5e98;letter-spacing:-0.818px;margin-left:-0.409px;'>Bill for Tracked Time Entries</div>
</body></html>
